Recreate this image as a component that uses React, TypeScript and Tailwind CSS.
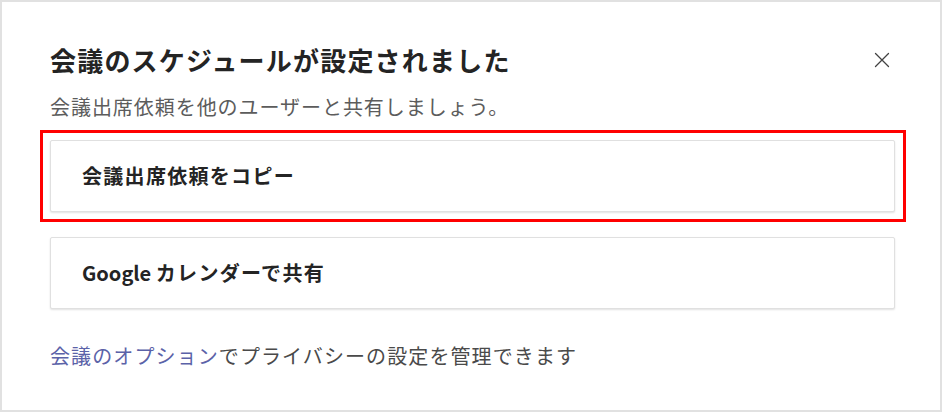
import React from 'react';

const font = { fontFamily: '"Noto Sans CJK JP", "Noto Sans", sans-serif' };

const CloseIcon: React.FC = () => (
  <svg width="16" height="16" viewBox="0 0 16 16" fill="none" stroke="#424242" strokeWidth="1.3" strokeLinecap="round">
    <path d="M1.5 1.5L14.5 14.5M14.5 1.5L1.5 14.5" />
  </svg>
);

const ShareOption: React.FC<{ children: React.ReactNode }> = ({ children }) => (
  <button className="flex h-[72px] w-full items-center rounded-[2px] border border-[#e0e0e0] bg-white pl-[31px] text-left text-[20px] font-bold tracking-[1.3px] text-[#242424] shadow-[0_1px_2px_rgba(0,0,0,0.12)]">
    {children}
  </button>
);

const App: React.FC = () => {
  return (
    <div className="h-[412px] w-[942px] border-2 border-[#e1e1e1] bg-white" style={font}>
      <div className="px-[48px] pt-[42px]">
        <div className="flex items-center justify-between">
          <h1 className="text-[26px] font-bold leading-[32px] tracking-[1.2px] text-[#242424]">
            会議のスケジュールが設定されました
          </h1>
          <button className="-mr-[6px] flex h-[32px] w-[32px] items-center justify-center">
            <CloseIcon />
          </button>
        </div>
        <p className="mt-[17px] text-[20px] leading-[28px] tracking-[0.95px] text-[#5c5c5c]">
          会議出席依頼を他のユーザーと共有しましょう。
        </p>

        <div className="mt-[9px] -ml-[10px] w-[866px] border-[3px] border-[#ff0000] py-[7px] pl-[7px] pr-[8px]">
          <ShareOption>会議出席依頼をコピー</ShareOption>
        </div>

        <div className="mt-[15px] w-[845px]">
          <ShareOption>
            <span className="tracking-normal">Google&nbsp;</span>カレンダーで共有
          </ShareOption>
        </div>

        <p className="mt-[33px] text-[20px] leading-[28px] tracking-[1.1px] text-[#4a4a4a]">
          <a className="text-[#5b62a8]">会議のオプション</a>でプライバシーの設定を管理できます
        </p>
      </div>
    </div>
  );
};

export default App;
